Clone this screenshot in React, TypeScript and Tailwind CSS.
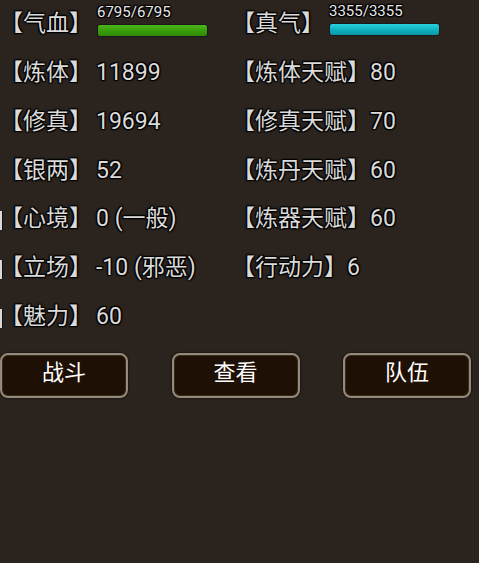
import React from 'react';

const outline = '[text-shadow:0_0_2px_#000,1px_1px_1px_#000,-1px_-1px_1px_#000,1px_-1px_1px_#000,-1px_1px_1px_#000]';

interface StatRow {
  label: string;
  value: string;
  stray?: boolean;
}

const leftRows: StatRow[] = [
  { label: '【炼体】', value: '11899' },
  { label: '【修真】', value: '19694' },
  { label: '【银两】', value: '52' },
  { label: '【心境】', value: '0 (一般)', stray: true },
  { label: '【立场】', value: '-10 (邪恶)', stray: true },
  { label: '【魅力】', value: '60', stray: true },
];

const rightRows: (StatRow | null)[] = [
  { label: '【炼体天赋】', value: '80' },
  { label: '【修真天赋】', value: '70' },
  { label: '【炼丹天赋】', value: '60' },
  { label: '【炼器天赋】', value: '60' },
  { label: '【行动力】', value: '6' },
  null,
];

const Bar = ({ text, fill }: { text: string; fill: string }) => (
  <div className="flex flex-col ml-[5px] -mt-[8px]">
    <span className={`text-[15px] leading-[17px] text-[#e6e6e6] ${outline}`}>{text}</span>
    <div className={`mt-[3px] w-[111px] h-[13px] rounded-[3px] border border-[#1a1a1a] ${fill}`} />
  </div>
);

const Row = ({ row, gap }: { row: StatRow; gap: string }) => (
  <div className="relative flex items-center h-[48.8px]">
    {/* clipped tail of a bracket peeking in from the left edge */}
    {row.stray && (
      <div className="absolute left-0 top-[16px] w-[3px] h-[19px] bg-[#d8d8d8] border-r border-[#111]" />
    )}
    <span>{row.label}</span>
    <span className={gap}>{row.value}</span>
  </div>
);

export default function App() {
  return (
    <div
      className={`w-[479px] h-[563px] overflow-hidden bg-[#2a231e] text-[23px] text-[#dadada] ${outline}`}
      style={{ fontFamily: 'Roboto, "Noto Sans CJK SC", sans-serif' }}
    >
      <div className="grid grid-cols-[232px_1fr]">
        <div className="flex flex-col">
          <div className="flex items-center h-[48.8px]">
            <span>【气血】</span>
            <Bar text="6795/6795" fill="bg-gradient-to-b from-[#4bb81a] via-[#3a9e0c] to-[#2f8a06]" />
          </div>
          {leftRows.map((r) => (
            <Row key={r.label} row={r} gap="ml-[4px]" />
          ))}
        </div>
        <div className="flex flex-col">
          <div className="flex items-center h-[48.8px]">
            <span>【真气】</span>
            <div className="-mt-[2px]">
              <Bar text="3355/3355" fill="bg-gradient-to-b from-[#2ad0de] via-[#0eb3c2] to-[#0a96a6]" />
            </div>
          </div>
          {rightRows.map((r, i) =>
            r ? <Row key={r.label} row={r} gap="ml-0" /> : <div key={i} className="h-[48.8px]" />
          )}
        </div>
      </div>
      <div className="flex justify-between pr-[8px] mt-[11px]">
        {['战斗', '查看', '队伍'].map((t) => (
          <button
            key={t}
            className="w-[128px] h-[45px] pb-[4px] rounded-[8px] border-2 border-[#958b78] bg-[#1f1005] shadow-[inset_0_0_0_1px_#3a2c1c,0_0_2px_#000] text-[22px] leading-none text-white"
          >
            {t}
          </button>
        ))}
      </div>
    </div>
  );
}
